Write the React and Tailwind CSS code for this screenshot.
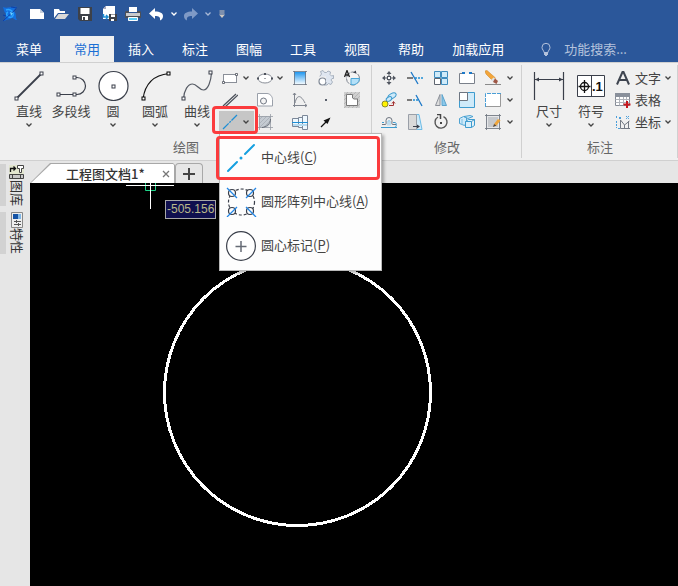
import React, { useState } from "react";

const INK = "#3a3f4a";
const BLUE = "#1e8fd5";
const PALE = "#cfeaf9";

const TABS = ["插入", "标注", "图幅", "工具", "视图", "帮助", "加载应用"];

export default function App() {
  const [menuOpen, setMenuOpen] = useState(true);

  return (
    <div className="flex min-h-screen flex-col overflow-hidden bg-[#e6e6e6] font-['Noto_Sans_CJK_SC',sans-serif] text-[13px] text-[#444444]">
      <header className="bg-[#2b579a]">
        <QuickAccess />
        <nav className="flex h-[26px] whitespace-nowrap text-white">
          <button className="mr-0.5 px-4">菜单</button>
          <button className="bg-[#f0f0f0] px-[14px] text-[#1a6fd4]">常用</button>
          {TABS.map((tab) => (
            <button key={tab} className="px-[14px]">{tab}</button>
          ))}
          <label className="ml-5 flex flex-1 items-center gap-2.5 text-[#b4c2dc]">
            <Svg>
              <path d="M6 11.500C6 9.500 4 8.800 4 6.300a4 4 0 0 1 8 0c0 2.500-2 3.200-2 5.200z" fill="none" stroke="#b4c2dc" />
              <path d="M6 12h4v2H9v1H7v-1H6z" fill="#b4c2dc" />
            </Svg>
            <input
              aria-label="功能搜索"
              placeholder="功能搜索..."
              className="w-24 bg-transparent outline-none placeholder:text-[#b4c2dc]"
            />
          </label>
        </nav>
      </header>

      <section className="relative z-10 flex border-y border-[#d0d0d0] bg-[#f0f0f0]">
        <Group label="绘图">
          <div className="flex pl-2">
            <BigButton label="直线" icon={<LineIcon />} />
            <BigButton label="多段线" icon={<PolylineIcon />} />
            <BigButton label="圆" icon={<CircleIcon />} />
            <BigButton label="圆弧" icon={<ArcIcon />} />
            <BigButton label="曲线" icon={<CurveIcon />} />
          </div>
          <div className="ml-px mr-[7px] mt-1 grid auto-rows-[22px] grid-cols-[35px_33px_26px_26px_26px]">
            <SplitButton label="矩形" icon={<RectIcon />} />
            <SplitButton label="椭圆" icon={<EllipseIcon />} />
            <IconButton label="渐变填充" icon={<GradientIcon />} />
            <IconButton label="齿轮" icon={<GearIcon />} />
            <IconButton label="局部放大" icon={<DetailIcon />} />
            <IconButton label="平行线" icon={<ParallelIcon />} left />
            <IconButton label="孔" icon={<OutlineIcon />} left />
            <IconButton label="公式曲线" icon={<GraphIcon />} />
            <IconButton label="点" icon={<PointIcon />} />
            <IconButton label="填充" icon={<RegionIcon />} />
            <div className="relative">
              <button
                aria-label="中心线"
                aria-expanded={menuOpen}
                onClick={() => setMenuOpen(!menuOpen)}
                className="flex h-full w-full items-center bg-[#c6c6c6] pl-[3px]"
              >
                <CenterLineIcon />
                <span className="flex flex-1 justify-center"><Chevron /></span>
              </button>
              {menuOpen && <CenterLineMenu />}
              <span className="pointer-events-none absolute -bottom-px -left-[7px] -right-1 -top-[5px] z-20 rounded-[4px] border-3 border-[#fb3b3d]" />
            </div>
            <IconButton label="剖面线" icon={<HatchIcon />} left />
            <IconButton label="轴" icon={<ShaftIcon />} />
            <IconButton label="箭头" icon={<ArrowIcon />} />
          </div>
        </Group>

        <Group label="修改">
          <div className="ml-1 mr-2 mt-1 grid auto-rows-[22px] grid-cols-[26px_26px_26px_26px_26px_8px]">
            <IconButton label="平移" icon={<MoveIcon />} />
            <IconButton label="裁剪" icon={<TrimIcon />} />
            <IconButton label="阵列" icon={<ArrayIcon />} />
            <IconButton label="打断" icon={<BreakIcon />} />
            <IconButton label="删除" icon={<EraseIcon />} />
            <MoreButton />
            <IconButton label="平移复制" icon={<CopyIcon />} />
            <IconButton label="延伸" icon={<ExtendIcon />} />
            <IconButton label="镜像" icon={<MirrorIcon />} />
            <IconButton label="缩放" icon={<ScaleIcon />} />
            <IconButton label="选择" icon={<SelectIcon />} />
            <MoreButton />
            <IconButton label="等距线" icon={<OffsetIcon />} />
            <IconButton label="拉伸" icon={<StretchIcon />} />
            <IconButton label="旋转" icon={<RotateIcon />} />
            <IconButton label="分解" icon={<ExplodeIcon />} />
            <IconButton label="编辑填充" icon={<HatchEditIcon />} />
            <MoreButton />
          </div>
        </Group>

        <Group label="标注">
          <div className="flex pl-1.5">
            <BigButton label="尺寸" icon={<DimensionIcon />} />
            <BigButton label="符号" icon={<SymbolIcon />} />
          </div>
          <div className="ml-px mr-[7px] mt-1 flex flex-col">
            <TextButton label="文字" icon={<TextIcon />} more />
            <TextButton label="表格" icon={<TableIcon />} />
            <TextButton label="坐标" icon={<CoordIcon />} more />
          </div>
        </Group>
      </section>

      <main className="flex flex-1">
        <aside className="flex w-[30px] flex-col gap-1.5 pt-[3px]">
          <SideTab label="图库" icon={<LibraryIcon />} />
          <SideTab label="特性" icon={<PropertyIcon />} />
        </aside>
        <div className="flex flex-1 flex-col">
          <DocumentTabs />
          <Drawing />
        </div>
      </main>
    </div>
  );
}

function QuickAccess() {
  return (
    <div className="flex h-9 items-start pt-1.5">
      <span className="mr-[5px] flex h-4 w-5 justify-center"><Logo /></span>
      <QuickButton label="新建">
        <path d="M1 3h10l4 4v6H1z" fill="#fff" />
        <path d="M11 3v4h4z" fill="#c7cfdb" />
      </QuickButton>
      <QuickButton label="打开">
        <path d="M1 12V3h5l1 2h5v2H5z" fill="#fff" />
        <path d="M2 13l3.500-5H16l-4 5z" fill="#d8d8d8" />
      </QuickButton>
      <QuickButton label="保存">
        <path d="M1 1h14v14H3l-2-2z" fill="#3d4149" />
        <path d="M3.500 2h9v6h-9zM5 10h6v4H5z" fill="#fff" />
        <path d="M6 11h2v3H6z" fill="#3d4149" />
      </QuickButton>
      <QuickButton label="另存为">
        <path d="M5 0h9v13H2V3z" fill="#fff" />
        <path d="M5 0v3H2z" fill="#aab" />
        <path d="M2.500 8v3h4M5 9l2 2-2 2" fill="none" stroke={BLUE} strokeWidth="1.500" />
        <path d="M8 8h8v7H8z" fill="#3d4149" />
        <path d="M10 8.500h4V11h-4zM10 13h3v2h-3z" fill="#fff" />
      </QuickButton>
      <QuickButton label="打印">
        <path d="M4 1h8v5H4z" fill="#fff" />
        <path d="M1 5h3v2h8V5h3l1 1v6H0V6z" fill="#4c5058" />
        <path d="M1 7h14v3H1z" fill="#c9cacc" />
        <path d="M3.500 11.500h9v3h-9z" fill="#58cdf5" stroke="#fff" />
      </QuickButton>
      <QuickButton label="撤销">
        <path d="M6 2v3.500c5 0 8 1.500 8 4.500 0 2-1 3.500-3 4.500.5-3.500-1-4.500-5-4.500v3L0 7.500z" fill="#fff" />
      </QuickButton>
      <button aria-label="撤销列表" className="flex h-4 w-[9px] items-center justify-center text-white"><Chevron /></button>
      <QuickButton label="重做">
        <path d="M10 2v3.500C5 5.500 2 7 2 10c0 2 1 3.500 3 4.500C4.500 11 6 10 10 10v3l6-5.500z" fill="#7f9ac6" />
      </QuickButton>
      <button aria-label="重做列表" className="flex h-4 w-3 items-center justify-center text-[#a9b9d6]"><Chevron /></button>
      <button aria-label="自定义" className="flex h-4 w-4 items-center justify-center">
        <svg viewBox="0 0 8 8" width="8" height="8"><path d="M1.500 1h5M1.500 3h5" stroke="#cfc8c0" /><path d="M1 4.500h6L4 8z" fill="#cfc8c0" /></svg>
      </button>
    </div>
  );
}

function QuickButton({ label, children }) {
  return (
    <button aria-label={label} className="flex h-4 w-6 items-center justify-center">
      <Svg>{children}</Svg>
    </button>
  );
}

function Group({ label, children }) {
  return (
    <div className="relative flex shrink-0 flex-col after:absolute after:inset-y-0.5 after:right-0 after:w-px after:bg-[#d0d0d0]">
      <div className="flex h-[70px] items-start">{children}</div>
      <div className="flex h-[27px] items-center justify-center text-[#666666]">{label}</div>
    </div>
  );
}

function BigButton({ label, icon }) {
  return (
    <button className="flex w-[42px] flex-col items-center whitespace-nowrap pt-1.5">
      {icon}
      <span className="leading-5">{label}</span>
      {label !== "多段线" && <span className="flex h-2 items-center"><Chevron /></span>}
    </button>
  );
}

function IconButton({ label, icon, left }) {
  return (
    <button
      aria-label={label}
      className={left ? "flex items-center pl-[3px]" : "flex items-center justify-center"}
    >
      {icon}
    </button>
  );
}

function SplitButton({ label, icon }) {
  return (
    <button aria-label={label} className="flex items-center pl-[3px]">
      {icon}
      <span className="flex flex-1 justify-center"><Chevron /></span>
    </button>
  );
}

function MoreButton() {
  return <button aria-label="更多" className="flex items-center justify-center"><Chevron /></button>;
}

function TextButton({ label, icon, more }) {
  return (
    <button className="flex h-[22px] items-center gap-1 whitespace-nowrap pl-0.5">
      {icon}
      <span className="leading-5">{label}</span>
      {more && <Chevron />}
    </button>
  );
}

function CenterLineMenu() {
  return (
    <div className="absolute left-0 top-full z-10 w-[163px] border border-[#b8b8b8] bg-[#fdfdfd] pb-[3px] pt-px shadow-[2px_2px_3px_rgba(0,0,0,0.3)]">
      <MenuItem label="中心线" hotkey="C" icon={<MenuLineIcon />} />
      <MenuItem label="圆形阵列中心线" hotkey="A" icon={<MenuArrayIcon />} />
      <MenuItem label="圆心标记" hotkey="P" icon={<MenuMarkIcon />} />
      <span className="pointer-events-none absolute -left-1 right-px top-[2px] h-11 rounded-[4px] border-3 border-[#fb3b3d]" />
    </div>
  );
}

function MenuItem({ label, hotkey, icon }) {
  return (
    <button className="flex h-11 w-full items-center gap-1 whitespace-nowrap pl-[5px]">
      {icon}
      <span>{label}(<u className="underline-offset-2">{hotkey}</u>)</span>
    </button>
  );
}

function SideTab({ label, icon }) {
  return (
    <button className="flex h-[42px] w-full gap-[3px]">
      <span className="h-full w-1.5 bg-[#d2d2d2]" />
      <span className="flex h-full w-4 flex-col items-center text-[#333333]">
        {icon}
        <span className="leading-4 [text-orientation:sideways] [writing-mode:vertical-rl]">{label}</span>
      </span>
    </button>
  );
}

function DocumentTabs() {
  return (
    <div className="flex h-[22px] items-end">
      <div className="h-5 bg-[#a8a8a8] px-px pt-px [clip-path:polygon(0_100%,20px_0,143px_0,145px_2px,145px_100%)]">
        <div className="flex h-full w-[143px] items-center bg-white pl-[35px] text-[#333333] [clip-path:polygon(0_100%,20px_0,142px_0,143px_1px,143px_100%)]">
          <button className="flex-1 whitespace-nowrap text-left font-medium leading-4">工程图文档1*</button>
          <button aria-label="关闭" className="flex h-4 w-4 items-center justify-center">
            <svg viewBox="0 0 8 8" width="8" height="8"><path d="M1 1l6 6M7 1L1 7" stroke="#777" strokeWidth="1.300" /></svg>
          </button>
        </div>
      </div>
      <button aria-label="新建文档" className="flex h-5 w-7 items-center justify-center rounded-t-[4px] border border-b-0 border-[#a8a8a8]">
        <svg viewBox="0 0 12 12" width="12" height="12"><path d="M6 0v12M0 6h12" stroke="#444" strokeWidth="2" /></svg>
      </button>
    </div>
  );
}

function Drawing() {
  return (
    <div className="relative flex-1 bg-black">
      <svg className="absolute inset-0 h-full w-full">
        <circle cx="267.500" cy="209.500" r="133" fill="none" stroke="#fff" strokeWidth="3" shapeRendering="crispEdges" />
        <path d="M115.500 0v7.500h10V0" fill="none" stroke="#1fd68a" />
        <path d="M96 2.500h48M120.500 0v26" stroke="#fff" />
      </svg>
      <span className="absolute left-[135px] top-[17px] border border-[#a8a8a8] bg-[#10104f] px-px font-['Liberation_Sans',sans-serif] text-[12px] leading-[17px] text-[#b9b98a]">
        -505.156
      </span>
    </div>
  );
}

// icons

function Svg({ size = 16, children }) {
  return (
    <svg viewBox={`0 0 ${size} ${size}`} width={size} height={size} className="shrink-0" aria-hidden="true">
      {children}
    </svg>
  );
}

function Chevron() {
  return (
    <svg viewBox="0 0 6 4" width="6" height="4" className="shrink-0" aria-hidden="true">
      <path d="M.5.5L3 3 5.500.5" fill="none" stroke="currentColor" strokeWidth="1.300" />
    </svg>
  );
}

function Node({ x, y, color = INK }) {
  return <rect x={x - 1.5} y={y - 1.5} width="3" height="3" fill="#fff" stroke={color} />;
}

function Logo() {
  return (
    <Svg>
      <path d="M1 1c4 2 8-1 14 0-2 1-3 3-3 4 3 3 1 6 3 9-3 0-3-2-5-2-2 2-5 1-8 3 2-3 1-5 2-7C2 6 2 4 1 1z" fill="#126fdf" />
      <path d="M4 4c3-1 6 0 7 3s-1 5-4 4-3-4-1-5" fill="none" stroke="#2aa4ff" strokeWidth="1.500" />
      <path d="M1 15L14 3M9 1l6 1M1 9l3 1" stroke="#0d3fa8" />
      <path d="M8 6l3 1-2 3z" fill="#6ad0ff" />
    </Svg>
  );
}

function LineIcon() {
  return (
    <Svg size={32}>
      <path d="M3 30L29 4" stroke={INK} strokeWidth="1.800" />
      <Node x={3.5} y={29.5} /><Node x={28.5} y={4.5} />
    </Svg>
  );
}

function PolylineIcon() {
  return (
    <Svg size={32}>
      <path d="M3 25.500H22a8.500 8.500 0 0 0 0-17H19" fill="none" stroke={INK} strokeWidth="1.200" />
      <Node x={3.5} y={25.5} /><Node x={19.5} y={25.5} /><Node x={19.5} y={8.5} />
    </Svg>
  );
}

function CircleIcon() {
  return (
    <Svg size={32}>
      <circle cx="16.500" cy="17" r="14.500" fill="#fff" stroke={INK} strokeWidth="1.200" />
      <Node x={16.5} y={17.5} />
    </Svg>
  );
}

function ArcIcon() {
  return (
    <Svg size={32}>
      <path d="M4 30C6 15 15 6 30 4.500" fill="none" stroke="#111" strokeWidth="1.200" />
      <Node x={4.5} y={29.5} color="#000" /><Node x={29.5} y={4.5} color="#000" />
    </Svg>
  );
}

function CurveIcon() {
  return (
    <Svg size={32}>
      <path d="M2.500 30C3 21 7 15 11.500 15s6.500 6 11 6S30 12 30.500 4" fill="none" stroke="#555a64" strokeWidth="1.200" />
      <Node x={2.5} y={29.5} /><Node x={29.5} y={3.5} />
    </Svg>
  );
}

function RectIcon() {
  return (
    <Svg>
      <rect x="1.500" y="4.500" width="13" height="8" fill="#fff" stroke="#8a8f98" />
      <path d="M.5 11.500h2v2h-2zM13.500 3.500h2v2h-2z" fill="#fff" stroke="#4c515b" strokeWidth=".8" />
    </Svg>
  );
}

function EllipseIcon() {
  return (
    <Svg>
      <ellipse cx="8" cy="8.500" rx="7" ry="4.500" fill="#fff" stroke="#8a8f98" />
      <path d="M7 3h2v2H7zM0 7.500h2v2H0zM14 7.500h2v2h-2zM7.500 8h1v1h-1z" fill="#4c515b" />
    </Svg>
  );
}

function GradientIcon() {
  return (
    <Svg>
      <defs>
        <linearGradient id="fade" x1="0" y1="0" x2="0" y2="1">
          <stop offset="0" stopColor="#1f96ee" /><stop offset="1" stopColor="#f2faff" />
        </linearGradient>
      </defs>
      <path d="M2 2h12v12H2z" fill="url(#fade)" />
      <path d="M2.500 1v14M13.500 1v14M1 1.500h14M1 14.500h14" stroke="#6a7280" strokeWidth=".8" />
    </Svg>
  );
}

function GearIcon() {
  return (
    <Svg>
      <path
        d="M2.500 1.500L5 .5l1.500 2h2L10 1l2.500 1-.5 2.500L13.500 6l2-.5v3H14L13 10l1.500 2-1.500 2.500-2.500-1-1.500 1.500H6L1 9l1-3 1.500-2z"
        fill="#dfe6f0" stroke="#98a3b3" strokeWidth=".8"
      />
      <path d="M0 6.500h8v3H0z" fill="#f0f0f0" />
      <circle cx="4.500" cy="11.500" r="3.500" fill="#fff" stroke="#808996" strokeWidth="1.200" />
      <path d="M8 8h2v4H8z" fill="#dfe6f0" />
    </Svg>
  );
}

function DetailIcon() {
  return (
    <Svg>
      <circle cx="9" cy="8.500" r="6.500" fill="#f4f4f4" stroke="#808690" strokeDasharray="6 1" />
      <path d="M7 8.500h8.500a6.500 6.500 0 0 1-8.500 6z" fill="#b4e0f8" stroke="#4ba7d8" />
      <path d="M9 2.500l3-2v3z" fill={INK} />
      <path d="M.5 7L3 .5 5.500 7M1.500 5h3" fill="none" stroke="#222" strokeWidth="1.300" />
    </Svg>
  );
}

function ParallelIcon() {
  return <Svg><path d="M1 14L14 2M3 15L16 3" stroke="#4b505a" strokeWidth="1.200" /></Svg>;
}

function OutlineIcon() {
  return (
    <Svg>
      <path d="M.5 1.500H10c3 0 5.500 3 5.500 6v6.500H.500z" fill="#fff" stroke="#9aa0aa" />
      <circle cx="6.500" cy="9" r="3" fill="#f5f5f5" stroke="#707783" />
    </Svg>
  );
}

function GraphIcon() {
  return (
    <Svg>
      <path d="M2.500 1v14M1 13.500h14M1 3l1.500-2L4 3M13 12l2 1.500-2 1.500" fill="none" stroke="#80858f" />
      <path d="M3 11C5 2 9 3 13 11" fill="none" stroke="#80858f" />
    </Svg>
  );
}

function PointIcon() {
  return <Svg><path d="M7 7h2v2H7z" fill="#5a606c" /></Svg>;
}

function Hatch() {
  return <path d="M0 4l4-4M0 8l8-8M0 12L12 0M0 16L16 0M4 16L16 4M8 16l8-8M12 16l4-4" stroke="#acacac" strokeWidth=".7" />;
}

function RegionIcon() {
  return (
    <Svg>
      <path d="M0 0h16v16H0z" fill="#cfcfcf" />
      <Hatch />
      <path d="M2.500 2.500h6v3.500l1.500 1h3.500v6.500h-11z" fill="#fff" stroke="#777" />
    </Svg>
  );
}

function CenterLineIcon() {
  return <Svg><path d="M1 15L15 1" stroke={BLUE} strokeWidth="1.300" strokeDasharray="8 1 2 1" /></Svg>;
}

function HatchIcon() {
  return (
    <Svg>
      <path d="M2 2h12v5c0 4-3 7-7 7H2z" fill="#c5cbd2" />
      <path d="M2 6l4-4M2 10l8-8M2 14L14 2M6 14l8-8" stroke="#a2a9b2" strokeWidth=".7" />
      <path d="M0 2.500h16M0 13.500h16M2.500 0v16M13.500 0v16" stroke="#989da6" strokeWidth=".8" />
      <path d="M13.500 5c0 5-4 8-8.500 8.500" fill="none" stroke="#666c76" />
    </Svg>
  );
}

function ShaftIcon() {
  return (
    <Svg>
      <path d="M.5 4.500h6v8h-6zM6.500 3.500h4v10h-4zM10.500 1.500h5v14h-5z" fill="#eef8ff" stroke="#7b8798" />
      <path d="M0 8.500h16" stroke={BLUE} />
      <path d="M1 10h14v2H1z" fill="#b5daef" />
    </Svg>
  );
}

function ArrowIcon() {
  return <Svg><path d="M3 13l5-5" stroke="#111" strokeWidth="1.200" /><path d="M12.500 3.500l-3 6.500-4-3.500z" fill="#111" /></Svg>;
}

function MoveIcon() {
  return (
    <Svg>
      <path d="M8 1l2.500 3h-5zM8 15l2.500-3h-5zM1 8l3-2.500v5zM15 8l-3-2.500v5z" fill="#515660" />
      <path d="M7.500 3h1v3h-1zM7.500 10h1v3h-1zM3 7.500h3v1H3zM10 7.500h3v1h-3z" fill="#515660" />
      <rect x="6.500" y="6.500" width="3" height="3" fill="#fff" stroke="#515660" />
    </Svg>
  );
}

function TrimIcon() {
  return (
    <Svg>
      <path d="M0 8h6" stroke="#555" strokeWidth="1.500" />
      <path d="M8 8h8" stroke={BLUE} strokeWidth="1.500" strokeDasharray="2 1" />
      <path d="M4 2l7 12" stroke="#1c78c8" strokeWidth="1.300" />
    </Svg>
  );
}

function ArrayIcon() {
  return (
    <Svg>
      <path d="M1.500 1.500h6v6h-6zM8.500 1.500h6v6h-6zM8.500 8.500h6v6h-6z" fill={PALE} stroke="#3e8cbe" />
      <path d="M1.500 8.500h6v6h-6z" fill="#fff" stroke="#5e6570" />
    </Svg>
  );
}

function BreakIcon() {
  return (
    <Svg>
      <path d="M.5 3.500h15v10H.500z" fill="#fff" />
      <path d="M4 3.500H.500v10h15v-10H12" fill="none" stroke="#7a808a" />
      <path d="M3 3h3M10 3h3" stroke="#1c78c8" strokeWidth="2" />
    </Svg>
  );
}

function EraseIcon() {
  return (
    <Svg>
      <path d="M0 14.500h16" stroke="#8a8a8a" />
      <path d="M0 1l2-.5L10.500 8 8 11 1 4z" fill="#f4a63a" stroke="#d08a2a" strokeWidth=".6" />
      <path d="M8.500 7.500l2 1.500-2.500 3-2-2z" fill="#dde0e4" />
      <path d="M10 8.500l3 2.500-1.500 3L8 12z" fill="#9e5846" />
    </Svg>
  );
}

function CopyIcon() {
  return (
    <Svg>
      <ellipse cx="11" cy="4" rx="4.500" ry="2.500" transform="rotate(-30 11 4)" fill={PALE} stroke="#3e9bce" />
      <ellipse cx="8" cy="7" rx="3" ry="2" transform="rotate(-30 8 7)" fill={PALE} stroke="#3e9bce" />
      <circle cx="4" cy="12" r="3" fill="#fff200" stroke="#8d8a2a" />
      <path d="M8 13.500h4.500V10M11 11.500l1.500-2 1.500 2" fill="none" stroke="#a33333" />
    </Svg>
  );
}

function ExtendIcon() {
  return (
    <Svg>
      <path d="M0 8h5" stroke="#555" strokeWidth="1.500" />
      <path d="M6 8h6" stroke={BLUE} strokeWidth="1.500" strokeDasharray="2 1" />
      <path d="M9 3l6 11" stroke="#1c78c8" strokeWidth="1.300" />
    </Svg>
  );
}

function MirrorIcon() {
  return (
    <Svg>
      <path d="M7 2.500v11H2.500z" fill="#ddd" stroke="#8b9099" />
      <path d="M9 2.500v11h4.500z" fill="#8cc8ea" stroke="#5ba3cc" />
    </Svg>
  );
}

function ScaleIcon() {
  return (
    <Svg>
      <path d="M.5.5h15v15H.500z" fill={PALE} stroke="#3e9bce" />
      <path d="M.5.5h8v8h-8z" fill="#fff" stroke="#6e7580" />
    </Svg>
  );
}

function SelectIcon() {
  return (
    <Svg>
      <path d="M.5 1.500h15v13H.500z" fill="#fff" />
      <path d="M.5 14.500h15v-13" fill="none" stroke="#999" />
      <path d="M.5 15V1.500H16" fill="none" stroke="#4a9ed6" strokeDasharray="4 1" />
    </Svg>
  );
}

function OffsetIcon() {
  return (
    <Svg>
      <path d="M1 10.500h3.500c1 0 .5-2 .5-4a3 3 0 0 1 6 0c0 2-.5 4 .5 4H15" fill="none" stroke="#6e7580" />
      <path d="M0 13.500h16M1 8.500h2M12 8.500h2c2 0 2 5-1 5" fill="none" stroke="#3e9bce" />
      <path d="M7 11.500V7a1.500 1.500 0 0 1 2 0v4.500" fill="none" stroke="#8cc8ea" />
    </Svg>
  );
}

function StretchIcon() {
  return (
    <Svg>
      <path d="M9 .5h3l3 15H9z" fill={PALE} stroke="#6cbbe5" />
      <path d="M1.500.5h8v15h-8z" fill="#dadada" stroke="#9a9fa8" />
      <path d="M6 12.500h5" stroke={INK} /><path d="M10 10.500l3 2-3 2z" fill={INK} />
    </Svg>
  );
}

function RotateIcon() {
  return (
    <Svg>
      <path d="M10.500 2.700A6 6 0 1 1 5 3" fill="none" stroke="#555" strokeWidth="1.400" />
      <path d="M4 .5h3.500V5" fill="none" stroke="#444" strokeWidth="1.500" />
      <path d="M7 8h2v2H7z" fill="#444" />
    </Svg>
  );
}

function ExplodeIcon() {
  return (
    <Svg>
      <path d="M.5 4.500l4-2 3 1v5l-2 3-5-2z" fill={PALE} stroke="#3e9bce" strokeWidth=".9" />
      <path d="M5 2.500l6-1 3 1-5 2z" fill={PALE} stroke="#3e9bce" strokeWidth=".9" />
      <path d="M6.500 7.500h6v6h-6zM6.500 7.500l3-2h6l-3 2M15.500 5.500v6l-3 2" fill="#d9effb" stroke="#3e9bce" />
      <path d="M3 5v6" stroke="#7cc0e5" />
    </Svg>
  );
}

function HatchEditIcon() {
  return (
    <Svg>
      <path d="M1 1h14v14H1z" fill="#e6e7e9" />
      <path d="M3 3h10v10H3z" fill="#c6c9cd" />
      <path d="M0 1.500h16M0 14.500h16M1.500 0v16M14.500 0v16" stroke="#737983" strokeWidth=".9" />
      <path d="M9 10l4-5 2.500 1.500-4 5z" fill="#efa53b" /><path d="M9 10l2.500 1.500L8 13z" fill="#5b4630" />
    </Svg>
  );
}

function DimensionIcon() {
  return (
    <Svg size={32}>
      <path d="M1.500 3v28M30.500 3v28M2 10.500h28" stroke={INK} strokeWidth="1.200" />
      <path d="M2 10.500l4-2v4zM30 10.500l-4-2v4z" fill={INK} />
    </Svg>
  );
}

function SymbolIcon() {
  return (
    <Svg size={32}>
      <path d="M2.500 6.500h27v21h-27zM16.500 6.500v21" fill="#fff" stroke={INK} />
      <circle cx="9.500" cy="17.500" r="4" fill="none" stroke="#111" strokeWidth="1.300" />
      <path d="M3.500 17.500h12M9.500 11v13" stroke="#111" strokeWidth="1.300" />
      <text x="17" y="22" fontSize="13" fontWeight="700" fontFamily="Liberation Sans" fill="#111">.1</text>
    </Svg>
  );
}

function TextIcon() {
  return <Svg><path d="M2 14.500L7.500 2h1L14 14.500M4.500 10h7" fill="none" stroke="#3f4550" strokeWidth="2" /></Svg>;
}

function TableIcon() {
  return (
    <Svg>
      <path d="M.5 2.500h14v11H.500z" fill="#fff" stroke="#858b96" />
      <path d="M0 1h15v4H0z" fill="#89909b" />
      <path d="M.5 7.500h14M.5 10.500h14M4.500 5v8.500M8.500 5v8.500M11.500 5v8.500" stroke="#b0b4bb" />
      <path d="M12 9v7M8.500 12.500h7" stroke="#c5161d" strokeWidth="2" />
    </Svg>
  );
}

function CoordIcon() {
  return (
    <Svg>
      <path d="M1.500 2v3M1.500 7v7M3 14.500h3M14 2l-3 3M11 2l3 3" stroke="#4b9fda" strokeDasharray="2 1" />
      <path d="M5.500 6v8.500H15M5.500 6l4 5 5-4M9.500 11v4M13.500 7v7" fill="none" stroke="#737984" />
      <path d="M4 3h2v2H4z" fill="#4b9fda" />
    </Svg>
  );
}

function MenuLineIcon() {
  return (
    <Svg size={32}>
      <path d="M3 30l9-9M20 13l9-9" stroke="#16a0e0" strokeWidth="2" strokeLinecap="round" />
      <circle cx="16" cy="17" r="1.500" fill="#16a0e0" />
    </Svg>
  );
}

function MenuArrayIcon() {
  return (
    <Svg size={32}>
      <circle cx="16.500" cy="17" r="13" fill="none" stroke={INK} strokeWidth="1.200" strokeDasharray="3 2" />
      {[[7, 8], [25, 8], [7, 26], [25, 26]].map(([x, y]) => (
        <circle key={`${x}-${y}`} cx={x} cy={y} r="3.500" fill="#fdfdfd" stroke={INK} strokeWidth="1.200" />
      ))}
      <path d="M2 3l10 10M21 22l10 10M31 3L21 13M12 22L2 32" stroke="#2386e6" strokeWidth="1.300" />
    </Svg>
  );
}

function MenuMarkIcon() {
  return (
    <Svg size={32}>
      <circle cx="16" cy="17" r="14.400" fill="#fff" stroke={INK} strokeWidth="1.200" />
      <path d="M10.500 17.500h11M16 12v11" stroke="#666b75" strokeWidth="1.500" />
    </Svg>
  );
}

function LibraryIcon() {
  return (
    <Svg>
      <path d="M0 1h15v14H0z" fill="#e2e6cf" />
      <path d="M1.500 8V4.500H6M4.500 2.500l2 2-2 2" fill="none" stroke="#111" strokeWidth="1.300" />
      <path d="M8.500 1.500h6v3h-2v4h-2v-4h-2z" fill="#fff" stroke="#444" />
      <path d="M.5 10.500h14v4H.500zM3.500 10v5M11.500 10v5" fill="#c7c7c7" stroke="#444" />
    </Svg>
  );
}

function PropertyIcon() {
  return (
    <Svg>
      <path d="M2.500.5h11v15h-11z" fill="#eee" stroke="#888" />
      <path d="M4 2h5v5H4z" fill="#1553a5" /><path d="M9 2h3v5H9z" fill="#7fb6e6" />
      <path d="M5 9.500h7M5 12.500h7M7.500 8v3M9.500 11v3" stroke="#555" />
    </Svg>
  );
}
